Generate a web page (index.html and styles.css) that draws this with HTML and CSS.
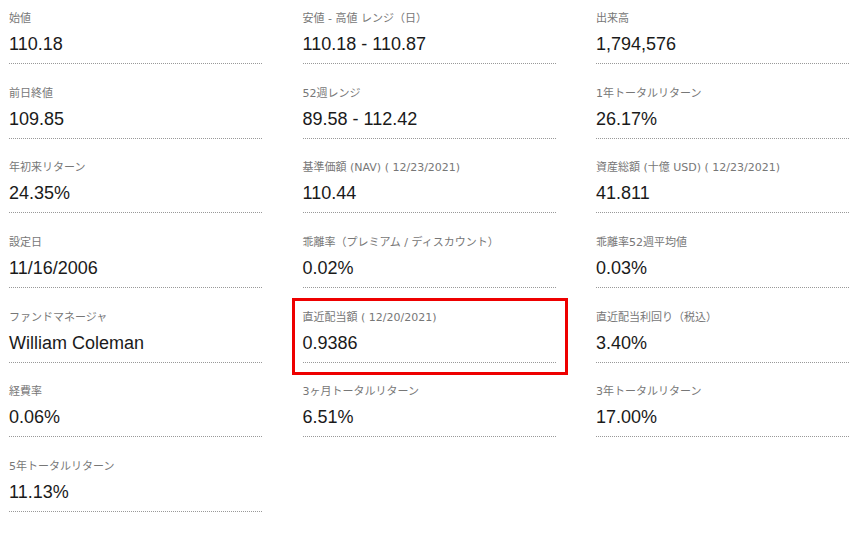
FILE: index.html
```html
<!DOCTYPE html>
<html lang="ja">
<head>
    <meta charset="UTF-8">
    <meta name="viewport" content="width=device-width, initial-scale=1.0">
    <title>ファンド概要</title>
    <link rel="stylesheet" href="styles.css">
</head>
<body>
    <div class="stats">
        <div class="stat">
            <div class="label">始値</div>
            <div class="value">110.18</div>
        </div>
        <div class="stat">
            <div class="label">安値 - 高値 レンジ（日）</div>
            <div class="value">110.18 - 110.87</div>
        </div>
        <div class="stat">
            <div class="label">出来高</div>
            <div class="value">1,794,576</div>
        </div>

        <div class="stat">
            <div class="label">前日終値</div>
            <div class="value">109.85</div>
        </div>
        <div class="stat">
            <div class="label">52週レンジ</div>
            <div class="value">89.58 - 112.42</div>
        </div>
        <div class="stat">
            <div class="label">1年トータルリターン</div>
            <div class="value">26.17%</div>
        </div>

        <div class="stat">
            <div class="label">年初来リターン</div>
            <div class="value">24.35%</div>
        </div>
        <div class="stat">
            <div class="label">基準価額 (NAV) ( 12/23/2021)</div>
            <div class="value">110.44</div>
        </div>
        <div class="stat">
            <div class="label">資産総額 (十億 USD) ( 12/23/2021)</div>
            <div class="value">41.811</div>
        </div>

        <div class="stat">
            <div class="label">設定日</div>
            <div class="value">11/16/2006</div>
        </div>
        <div class="stat">
            <div class="label">乖離率（プレミアム / ディスカウント）</div>
            <div class="value">0.02%</div>
        </div>
        <div class="stat">
            <div class="label">乖離率52週平均値</div>
            <div class="value">0.03%</div>
        </div>

        <div class="stat">
            <div class="label">ファンドマネージャ</div>
            <div class="value">William Coleman</div>
        </div>
        <div class="stat highlight">
            <div class="label">直近配当額 ( 12/20/2021)</div>
            <div class="value">0.9386</div>
        </div>
        <div class="stat">
            <div class="label">直近配当利回り（税込）</div>
            <div class="value">3.40%</div>
        </div>

        <div class="stat">
            <div class="label">経費率</div>
            <div class="value">0.06%</div>
        </div>
        <div class="stat">
            <div class="label">3ヶ月トータルリターン</div>
            <div class="value">6.51%</div>
        </div>
        <div class="stat">
            <div class="label">3年トータルリターン</div>
            <div class="value">17.00%</div>
        </div>

        <div class="stat">
            <div class="label">5年トータルリターン</div>
            <div class="value">11.13%</div>
        </div>
    </div>
</body>
</html>
```

FILE: styles.css
```css
body {
    margin: 0;
    padding: 0;
    background: #fff;
    font-family: "Liberation Sans", "Noto Sans CJK JP", sans-serif;
}

.stats {
    display: grid;
    grid-template-columns: repeat(3, 253px);
    column-gap: 40.5px;
    row-gap: 10.67px;
    padding: 0 9px;
}

.stat {
    position: relative;
    padding: 11px 0 7px;
    border-bottom: 1px dotted #999;
}

.label {
    font-family: "DejaVu Sans", "Noto Sans CJK JP", sans-serif;
    font-size: 11px;
    line-height: 16px;
    color: #777;
    white-space: nowrap;
}

.value {
    margin-top: 5px;
    font-size: 18px;
    line-height: 24px;
    color: #1a1a1a;
}

.highlight::after {
    content: "";
    position: absolute;
    top: -1px;
    left: -11px;
    right: -12px;
    bottom: -13px;
    border: 3px solid #ee0000;
}
```
